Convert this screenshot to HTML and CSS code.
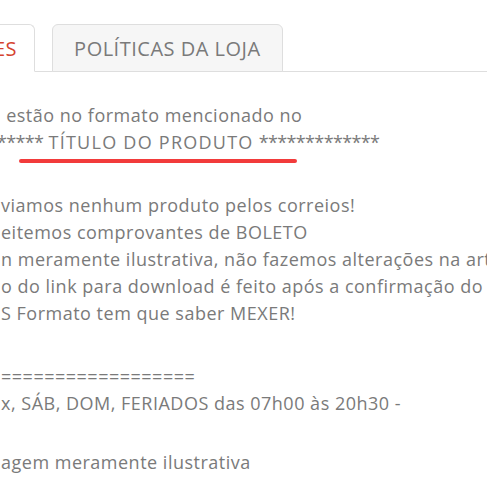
FILE: index.html
```html
<!DOCTYPE html>
<html lang="pt-BR">
<head>
<meta charset="utf-8">
<title>Produto</title>
<link rel="stylesheet" href="styles.css">
</head>
<body>
<div class="page">
  <nav class="tabs">
    <div class="tab tab-active">ES</div>
    <div class="tab tab-idle">POLÍTICAS DA LOJA</div>
  </nav>
  <div class="content">
    <div class="block">
      <p class="line">&nbsp;estão no formato mencionado no</p>
      <p class="line line-title"><span class="stars">*****</span> <span class="title">TÍTULO DO PRODUTO</span> <span class="stars">*************</span></p>
      <span class="mark"></span>
    </div>
    <div class="block">
      <p class="line">viamos nenhum produto pelos correios!</p>
      <p class="line">eitemos comprovantes de BOLETO</p>
      <p class="line">n meramente ilustrativa, não fazemos alterações na arte</p>
      <p class="line">o do link para download é feito após a confirmação do pagamento</p>
      <p class="line">S Formato tem que saber MEXER!</p>
    </div>
    <div class="block block-sep">
      <p class="line">==================</p>
      <p class="line">x, SÁB, DOM, FERIADOS das 07h00 às 20h30 -</p>
    </div>
    <div class="block block-last">
      <p class="line">agem meramente ilustrativa</p>
    </div>
  </div>
</div>
</body>
</html>
```
FILE: styles.css
```css
html, body {
  margin: 0;
  padding: 0;
  background: #fff;
}

body {
  font-family: "Open Sans", Lato, Arial, sans-serif;
  color: #7a7a7a;
  overflow: hidden;
}

.page {
  width: 487px;
  height: 500px;
  overflow: hidden;
}

.tabs {
  display: flex;
  align-items: flex-end;
  margin-top: 24px;
  height: 48px;
  box-sizing: border-box;
  border-bottom: 1px solid #dedede;
}

.tab {
  height: 48px;
  box-sizing: border-box;
  margin-bottom: -1px;
  display: flex;
  align-items: center;
  font-size: 20px;
  letter-spacing: 0.5px;
  border: 1px solid #dedede;
  border-radius: 0 6px 0 0;
  white-space: nowrap;
}

.tab-active {
  color: #d5432f;
  background: #fff;
  border-left: none;
  border-bottom-color: #fff;
  margin-left: -6px;
  padding: 0 17px 0 0;
}

.tab-idle {
  margin-left: 17px;
  padding: 0 21px;
  background: #f6f6f6;
  color: #7a7a7a;
  border-radius: 6px 6px 0 0;
  border-bottom-color: #dedede;
}

.content {
  padding-top: 30px;
  font-size: 18px;
  line-height: 27px;
  letter-spacing: 0.5px;
}

.block {
  position: relative;
}

.block + .block {
  margin-top: 36px;
}

.block-sep {
  margin-top: 49px;
}

.block + .block-last {
  margin-top: 32px;
}

.line {
  margin: 0;
  white-space: nowrap;
  padding-left: 1px;
}

.line-title {
  text-indent: -4px;
}

.stars {
  letter-spacing: -0.65px;
}

.title {
  letter-spacing: 1.25px;
}

.mark {
  position: absolute;
  left: 19px;
  top: 57px;
  width: 278px;
  height: 4px;
  border-radius: 2px;
  background: #f23b3b;
}
```
